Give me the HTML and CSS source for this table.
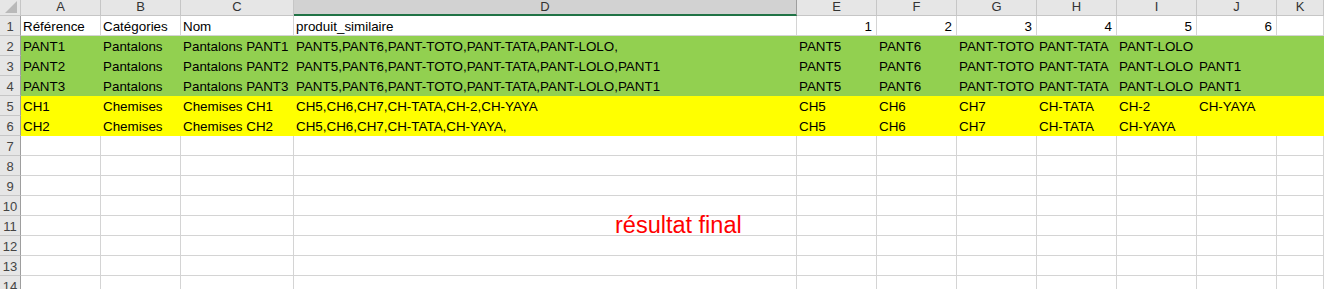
FILE: index.html
```html
<!DOCTYPE html>
<html lang="fr">
<head>
    <meta charset="UTF-8">
    <title>produit_similaire</title>
    <link rel="stylesheet" href="styles.css">
</head>
<body>
    <div class="sheet">
        <!-- column headers -->
        <div class="corner">
            <svg width="14" height="13" viewBox="0 0 14 13"><polygon points="1,12 13,12 13,0" fill="#b9b9b9"/></svg>
        </div>
        <div class="col-head">A</div>
        <div class="col-head">B</div>
        <div class="col-head">C</div>
        <div class="col-head selected">D</div>
        <div class="col-head">E</div>
        <div class="col-head">F</div>
        <div class="col-head">G</div>
        <div class="col-head">H</div>
        <div class="col-head">I</div>
        <div class="col-head">J</div>
        <div class="col-head">K</div>

        <!-- 1 -->
        <div class="row-head">1</div>
        <div class="cell">Référence</div>
        <div class="cell">Catégories</div>
        <div class="cell">Nom</div>
        <div class="cell">produit_similaire</div>
        <div class="cell num">1</div>
        <div class="cell num">2</div>
        <div class="cell num">3</div>
        <div class="cell num">4</div>
        <div class="cell num">5</div>
        <div class="cell num">6</div>
        <div class="cell"></div>

        <!-- 2 -->
        <div class="row-head">2</div>
        <div class="cell green">PANT1</div>
        <div class="cell green">Pantalons</div>
        <div class="cell green">Pantalons PANT1</div>
        <div class="cell green">PANT5,PANT6,PANT-TOTO,PANT-TATA,PANT-LOLO,</div>
        <div class="cell green">PANT5</div>
        <div class="cell green">PANT6</div>
        <div class="cell green">PANT-TOTO</div>
        <div class="cell green">PANT-TATA</div>
        <div class="cell green">PANT-LOLO</div>
        <div class="cell green"></div>
        <div class="cell green"></div>

        <!-- 3 -->
        <div class="row-head">3</div>
        <div class="cell green">PANT2</div>
        <div class="cell green">Pantalons</div>
        <div class="cell green">Pantalons PANT2</div>
        <div class="cell green">PANT5,PANT6,PANT-TOTO,PANT-TATA,PANT-LOLO,PANT1</div>
        <div class="cell green">PANT5</div>
        <div class="cell green">PANT6</div>
        <div class="cell green">PANT-TOTO</div>
        <div class="cell green">PANT-TATA</div>
        <div class="cell green">PANT-LOLO</div>
        <div class="cell green">PANT1</div>
        <div class="cell green"></div>

        <!-- 4 -->
        <div class="row-head">4</div>
        <div class="cell green">PANT3</div>
        <div class="cell green">Pantalons</div>
        <div class="cell green">Pantalons PANT3</div>
        <div class="cell green">PANT5,PANT6,PANT-TOTO,PANT-TATA,PANT-LOLO,PANT1</div>
        <div class="cell green">PANT5</div>
        <div class="cell green">PANT6</div>
        <div class="cell green">PANT-TOTO</div>
        <div class="cell green">PANT-TATA</div>
        <div class="cell green">PANT-LOLO</div>
        <div class="cell green">PANT1</div>
        <div class="cell green"></div>

        <!-- 5 -->
        <div class="row-head">5</div>
        <div class="cell yellow">CH1</div>
        <div class="cell yellow">Chemises</div>
        <div class="cell yellow">Chemises CH1</div>
        <div class="cell yellow">CH5,CH6,CH7,CH-TATA,CH-2,CH-YAYA</div>
        <div class="cell yellow">CH5</div>
        <div class="cell yellow">CH6</div>
        <div class="cell yellow">CH7</div>
        <div class="cell yellow">CH-TATA</div>
        <div class="cell yellow">CH-2</div>
        <div class="cell yellow">CH-YAYA</div>
        <div class="cell yellow"></div>

        <!-- 6 -->
        <div class="row-head">6</div>
        <div class="cell yellow">CH2</div>
        <div class="cell yellow">Chemises</div>
        <div class="cell yellow">Chemises CH2</div>
        <div class="cell yellow">CH5,CH6,CH7,CH-TATA,CH-YAYA,</div>
        <div class="cell yellow">CH5</div>
        <div class="cell yellow">CH6</div>
        <div class="cell yellow">CH7</div>
        <div class="cell yellow">CH-TATA</div>
        <div class="cell yellow">CH-YAYA</div>
        <div class="cell yellow"></div>
        <div class="cell yellow"></div>

        <!-- 7 -->
        <div class="row-head">7</div>
        <div class="cell"></div><div class="cell"></div><div class="cell"></div><div class="cell"></div><div class="cell"></div><div class="cell"></div><div class="cell"></div><div class="cell"></div><div class="cell"></div><div class="cell"></div><div class="cell"></div>

        <!-- 8 -->
        <div class="row-head">8</div>
        <div class="cell"></div><div class="cell"></div><div class="cell"></div><div class="cell"></div><div class="cell"></div><div class="cell"></div><div class="cell"></div><div class="cell"></div><div class="cell"></div><div class="cell"></div><div class="cell"></div>

        <!-- 9 -->
        <div class="row-head">9</div>
        <div class="cell"></div><div class="cell"></div><div class="cell"></div><div class="cell"></div><div class="cell"></div><div class="cell"></div><div class="cell"></div><div class="cell"></div><div class="cell"></div><div class="cell"></div><div class="cell"></div>

        <!-- 10 -->
        <div class="row-head">10</div>
        <div class="cell"></div><div class="cell"></div><div class="cell"></div><div class="cell"></div><div class="cell"></div><div class="cell"></div><div class="cell"></div><div class="cell"></div><div class="cell"></div><div class="cell"></div><div class="cell"></div>

        <!-- 11 -->
        <div class="row-head">11</div>
        <div class="cell"></div><div class="cell"></div><div class="cell"></div>
        <div class="cell"><span class="note">résultat final</span></div>
        <div class="cell"></div><div class="cell"></div><div class="cell"></div><div class="cell"></div><div class="cell"></div><div class="cell"></div><div class="cell"></div>

        <!-- 12 -->
        <div class="row-head">12</div>
        <div class="cell"></div><div class="cell"></div><div class="cell"></div><div class="cell"></div><div class="cell"></div><div class="cell"></div><div class="cell"></div><div class="cell"></div><div class="cell"></div><div class="cell"></div><div class="cell"></div>

        <!-- 13 -->
        <div class="row-head">13</div>
        <div class="cell"></div><div class="cell"></div><div class="cell"></div><div class="cell"></div><div class="cell"></div><div class="cell"></div><div class="cell"></div><div class="cell"></div><div class="cell"></div><div class="cell"></div><div class="cell"></div>

        <!-- 14 -->
        <div class="row-head">14</div>
        <div class="cell"></div><div class="cell"></div><div class="cell"></div><div class="cell"></div><div class="cell"></div><div class="cell"></div><div class="cell"></div><div class="cell"></div><div class="cell"></div><div class="cell"></div><div class="cell"></div>
    </div>
</body>
</html>
```

FILE: styles.css
```css
* {
    box-sizing: border-box;
}

body {
    margin: 0;
    background: #fff;
    font-family: 'Liberation Sans', Arial, sans-serif;
    font-size: 13.4px;
    color: #000;
    overflow: hidden;
}

.sheet {
    display: grid;
    grid-template-columns: 21px 80px 80px 113px 503px repeat(6, 80px) 1fr;
    grid-template-rows: 16px;
    grid-auto-rows: 20px;
    width: 1324px;
}

.corner {
    background: #e6e6e6;
    border-right: 1px solid #c6c6c6;
    border-bottom: 1px solid #c6c6c6;
    display: flex;
    justify-content: flex-end;
    align-items: flex-end;
    padding: 0 2px 1px 0;
}

.corner svg {
    display: block;
}

.col-head {
    background: #e6e6e6;
    color: #333;
    text-align: center;
    font-size: 13px;
    line-height: 13px;
    border-right: 1px solid #c6c6c6;
    border-bottom: 1px solid #c6c6c6;
}

.col-head.selected {
    background: #d2d2d2;
    border-right-color: #9e9e9e;
    border-bottom: 2px solid #217346;
}

.row-head {
    background: #e6e6e6;
    color: #444;
    text-align: center;
    font-size: 13px;
    line-height: 21px;
    border-right: 1px solid #9e9e9e;
    border-bottom: 1px solid #c6c6c6;
}

.cell {
    padding: 0 2px;
    line-height: 21px;
    white-space: nowrap;
    border-right: 1px solid #d4d4d4;
    border-bottom: 1px solid #d4d4d4;
}

.cell.num {
    text-align: right;
    padding-right: 4px;
}

.green {
    background: #92d050;
    border-color: #92d050;
}

.yellow {
    background: #ffff00;
    border-color: #ffff00;
}

.note {
    margin-left: 319px;
    color: #ff0000;
    font-size: 23.5px;
    line-height: 19px;
}
```
